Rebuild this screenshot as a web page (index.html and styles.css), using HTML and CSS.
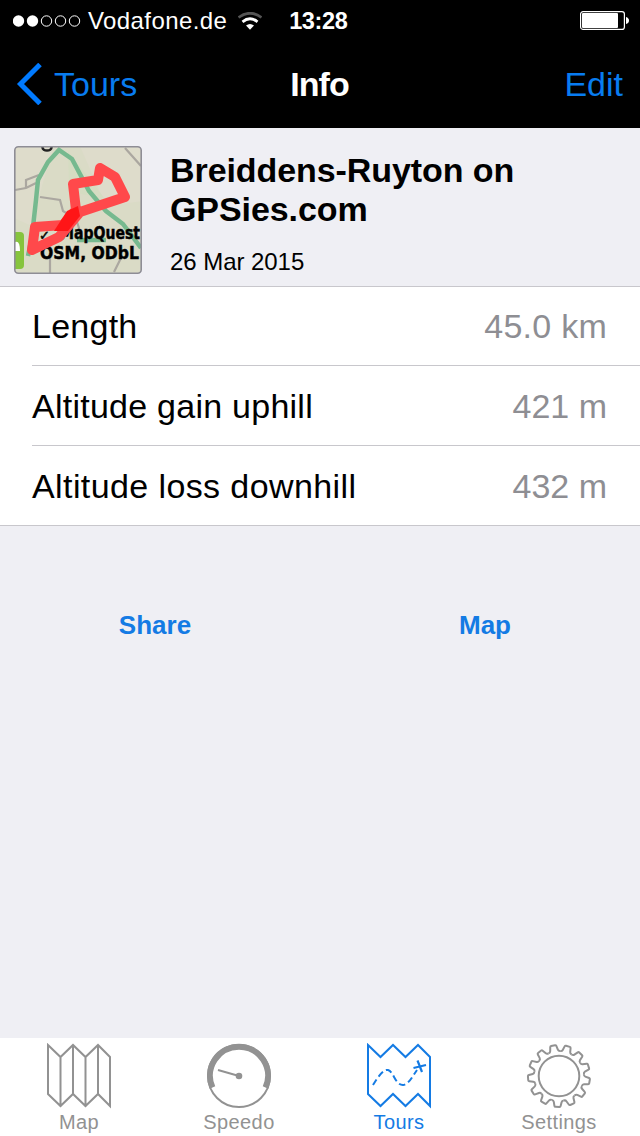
FILE: index.html
```html
<!DOCTYPE html>
<html lang="en">
<head>
<meta charset="utf-8">
<title>Info</title>
<link rel="stylesheet" href="styles.css">
</head>
<body>
<div class="screen">
  <header class="top">
    <div class="status">
      <svg class="signal" width="68" height="12" viewBox="0 0 68 12"><g fill="#fff"><circle cx="5.500" cy="6" r="5.700"/><circle cx="19.500" cy="6" r="5.700"/></g><g fill="none" stroke="#fff"><circle cx="33.500" cy="6" r="5.200"/><circle cx="47.500" cy="6" r="5.200"/><circle cx="61.500" cy="6" r="5.200"/></g></svg>
      <span class="carrier">Vodafone.de</span>
      <svg class="wifi" width="24" height="18" viewBox="0 0 24 18"><path d="M.500 5.500Q12-3 23.500 5.500" fill="none" stroke="#555" stroke-width="2.700"/><path d="M4.500 9.800Q12 3.800 19.500 9.800" fill="none" stroke="#fff" stroke-width="2.800"/><path d="M8 13.500Q12 10.300 16 13.500L12 17.800Z" fill="#fff"/></svg>
      <span class="clock">13:28</span>
      <svg class="battery" width="50" height="20" viewBox="0 0 50 20"><rect x=".600" y=".600" width="43.800" height="17.800" rx="2.500" fill="none" stroke="#fff" stroke-width="1.200"/><rect x="2" y="2" width="36" height="15" rx="1" fill="#fff"/><path d="M46 6q3 1 3 3.500t-3 3.500z" fill="#fff"/></svg>
    </div>
    <nav class="nav">
      <a class="back"><svg width="26" height="42" viewBox="0 0 26 42"><path d="M24 1.500L4.500 21L24 40.500" fill="none" stroke="#007aff" stroke-width="5"/></svg><span class="back-text">Tours</span></a>
      <h1 class="title">Info</h1>
      <a class="edit">Edit</a>
    </nav>
  </header>
  <section class="summary">
    <svg class="thumb" width="128" height="128" viewBox="0 0 128 128">
      <defs><clipPath id="frame"><rect x="1" y="1" width="126" height="126" rx="3"/></clipPath></defs>
      <g clip-path="url(#frame)" fill="none">
        <rect width="128" height="128" fill="#dadbc6"/>
        <path d="M0 0H40L28 40L18 80L0 72ZM66 0H128V55L92 60Z" fill="#dedccb"/>
        <path d="M54 5L91 53L63 47L55 40Z" fill="#d5dcc2"/>
        <path d="M1 44L12 42L22 37M12 42V34L25 29M26 51L46 54L49 65L62 73L68 91M111 2L127 20M36 127V107M100 126L107 112" stroke="#aba7a0" stroke-width="2.200"/>
        <path d="M14 110L18 90L22 54L24 34L34 16L45 4L58 13L75 45L92 65L109 78L127 102M63 94H92" stroke="#76b98f" stroke-width="4.500"/>
        <rect x="-8" y="86" width="18" height="37" rx="4" fill="#86c43d"/>
        <path d="M1 96Q6 94 6 105H1Z" fill="#fff"/>
        <ellipse cx="33" cy="1.500" rx="4.500" ry="3" stroke="#222" stroke-width="2.500"/>
        <g class="map-text"><text x="25" y="94" font-size="13">✓</text><text x="46" y="93" textLength="80" lengthAdjust="spacingAndGlyphs">MapQuest</text><text x="26" y="113" textLength="99" lengthAdjust="spacingAndGlyphs">OSM, ODbL</text></g>
        <path d="M18 104L21 81L49 79L62 64L59 38L84 34L86 22L101 31L111 51L66 66L45 91Z" stroke="#ff494b" stroke-width="10" stroke-linejoin="round"/>
        <path d="M53 65L64 60L66 70L54 85L40 85Z" fill="#ff1517"/>
      </g>
      <rect x=".800" y=".800" width="126.400" height="126.400" rx="3.500" fill="none" stroke="#8e8d95" stroke-width="1.600"/>
    </svg>
    <div class="summary-text">
      <h2 class="name">Breiddens-Ruyton on<br>GPSies.com</h2>
      <p class="date">26 Mar 2015</p>
    </div>
  </section>
  <main class="list">
    <div class="row"><span class="label">Length</span><span class="value km">45.0 km</span></div>
    <div class="row"><span class="label">Altitude gain uphill</span><span class="value">421 m</span></div>
    <div class="row"><span class="label loss">Altitude loss downhill</span><span class="value">432 m</span></div>
  </main>
  <div class="actions"><a class="action">Share</a><a class="action">Map</a></div>
  <footer class="tabs">
    <a class="tab"><svg width="66" height="66" viewBox="0 0 66 66" fill="none" stroke="#929292" stroke-width="2"><path d="M2 2L14.500 14L27 2L39.500 14L52 2L64 14V63L52 51L39.500 63L27 51L14.500 63L2 51ZM14.500 14V63M27 2V51M39.500 14V63M52 2V51"/></svg><span>Map</span></a>
    <a class="tab"><svg width="66" height="66" viewBox="0 0 66 66" fill="none" stroke="#929292"><circle cx="33" cy="33" r="31" stroke-width="2"/><path d="M6.500 44.500A29 29 0 1 1 59.500 44.500" stroke-width="6"/><path d="M12 27L33 33" stroke-width="2"/><circle cx="33" cy="33" r="3.300" fill="#929292" stroke="none"/></svg><span>Speedo</span></a>
    <a class="tab active"><svg width="66" height="66" viewBox="0 0 66 66" fill="none" stroke="#147be4" stroke-width="2"><path d="M2 2L14.500 14L27 2L39.500 14L52 2L64 14V63L52 51L39.500 63L27 51L14.500 63L2 51Z"/><path d="M7 42C12 34 17 26 22 27C28 29 29 42 37 42C43 41 46 34 51 27" stroke-dasharray="6.500 3.500"/><path d="M47.500 25L60 22M51.500 17.500L56 29" stroke-width="2.200"/></svg><span>Tours</span></a>
    <a class="tab"><svg width="66" height="66" viewBox="-33 -33 66 66" fill="none" stroke="#929292" stroke-width="2" stroke-linejoin="round"><defs><path id="tooth" d="M-5.980 -24.270Q-4.200 -24.500 -3.900 -26L-3.100 -30Q-2.900 -31 -2 -31H2Q2.900 -31 3.100 -30L3.900 -26Q4.200 -24.500 5.980 -24.270"/></defs>
      <circle r="20.300"/>
      <use href="#tooth" transform="rotate(-11)"/><use href="#tooth" transform="rotate(16.690)"/><use href="#tooth" transform="rotate(44.380)"/><use href="#tooth" transform="rotate(72.080)"/><use href="#tooth" transform="rotate(99.770)"/><use href="#tooth" transform="rotate(127.460)"/><use href="#tooth" transform="rotate(155.150)"/><use href="#tooth" transform="rotate(182.850)"/><use href="#tooth" transform="rotate(210.540)"/><use href="#tooth" transform="rotate(238.230)"/><use href="#tooth" transform="rotate(265.920)"/><use href="#tooth" transform="rotate(293.620)"/><use href="#tooth" transform="rotate(321.310)"/></svg><span>Settings</span></a>
  </footer>
</div>
</body>
</html>
```
FILE: styles.css
```css
* { box-sizing: border-box; }
body { margin: 0; font-family: "Liberation Sans", Arial, sans-serif; color: #000; }
svg { display: block; flex: none; }
.screen { width: 640px; height: 1136px; display: flex; flex-direction: column; background: #efeff4; }
.top { height: 128px; background: #000; color: #fff; }
.status { height: 42px; display: flex; align-items: center; padding: 0 10px 0 13px; font-size: 24px; }
.carrier { margin-left: 7px; letter-spacing: .4px; }
.wifi { margin-left: 11px; }
.clock { margin-left: 27px; font-size: 23.5px; font-weight: 700; letter-spacing: -.4px; }
.battery { margin-left: auto; }
.nav { height: 86px; display: grid; grid-template-columns: 1fr auto 1fr; align-items: center; padding: 0 17px 2px 16px; font-size: 34px; }
.back { display: flex; align-items: center; color: #087cf0; }
.back-text { margin-left: 12px; }
.title { margin: 0; font-size: 34px; letter-spacing: -.9px; font-weight: 700; }
.edit { justify-self: end; color: #087cf0; }
.summary { height: 158px; display: flex; padding: 18px 14px 0; }
.map-text { fill: #000; stroke: #000; stroke-width: .5px; font: 700 18px "DejaVu Sans", sans-serif; }
.summary-text { margin-left: 28px; padding-top: 5px; }
.name { margin: 0; font-size: 34px; line-height: 39px; font-weight: 700; letter-spacing: -.08px; }
.date { margin: 19px 0 0; font-size: 24px; line-height: 28px; letter-spacing: -.05px; }
.list { background: #fff; height: 240px; border: 1px solid #c8c7cc; border-width: 1px 0; }
.row { height: 80px; margin-left: 32px; padding: 2px 33px 0 0; display: flex; justify-content: space-between; align-items: center; font-size: 34px; border-bottom: 1px solid #c8c7cc; }
.row:first-child { height: 79px; padding-top: 1px; }
.row:last-child { height: 79px; border-bottom: 0; }
.label { letter-spacing: .25px; }
.loss { letter-spacing: .4px; }
.value { color: #8e8e93; }
.km { letter-spacing: .25px; }
.actions { display: grid; grid-template-columns: 310px 350px; height: 200px; padding-top: 84px; }
.action { text-align: center; font-size: 26px; line-height: 30px; font-weight: 700; color: #147be4; }
.tabs { margin-top: auto; height: 98px; display: grid; grid-template-columns: repeat(4, 160px); background: #fff; color: #929292; font-size: 20px; }
.tab { display: flex; flex-direction: column; align-items: center; padding: 5px 2px 0 0; line-height: 24px; letter-spacing: .4px; }
.tab span { margin-top: 1px; }
.active { color: #147be4; }
```
